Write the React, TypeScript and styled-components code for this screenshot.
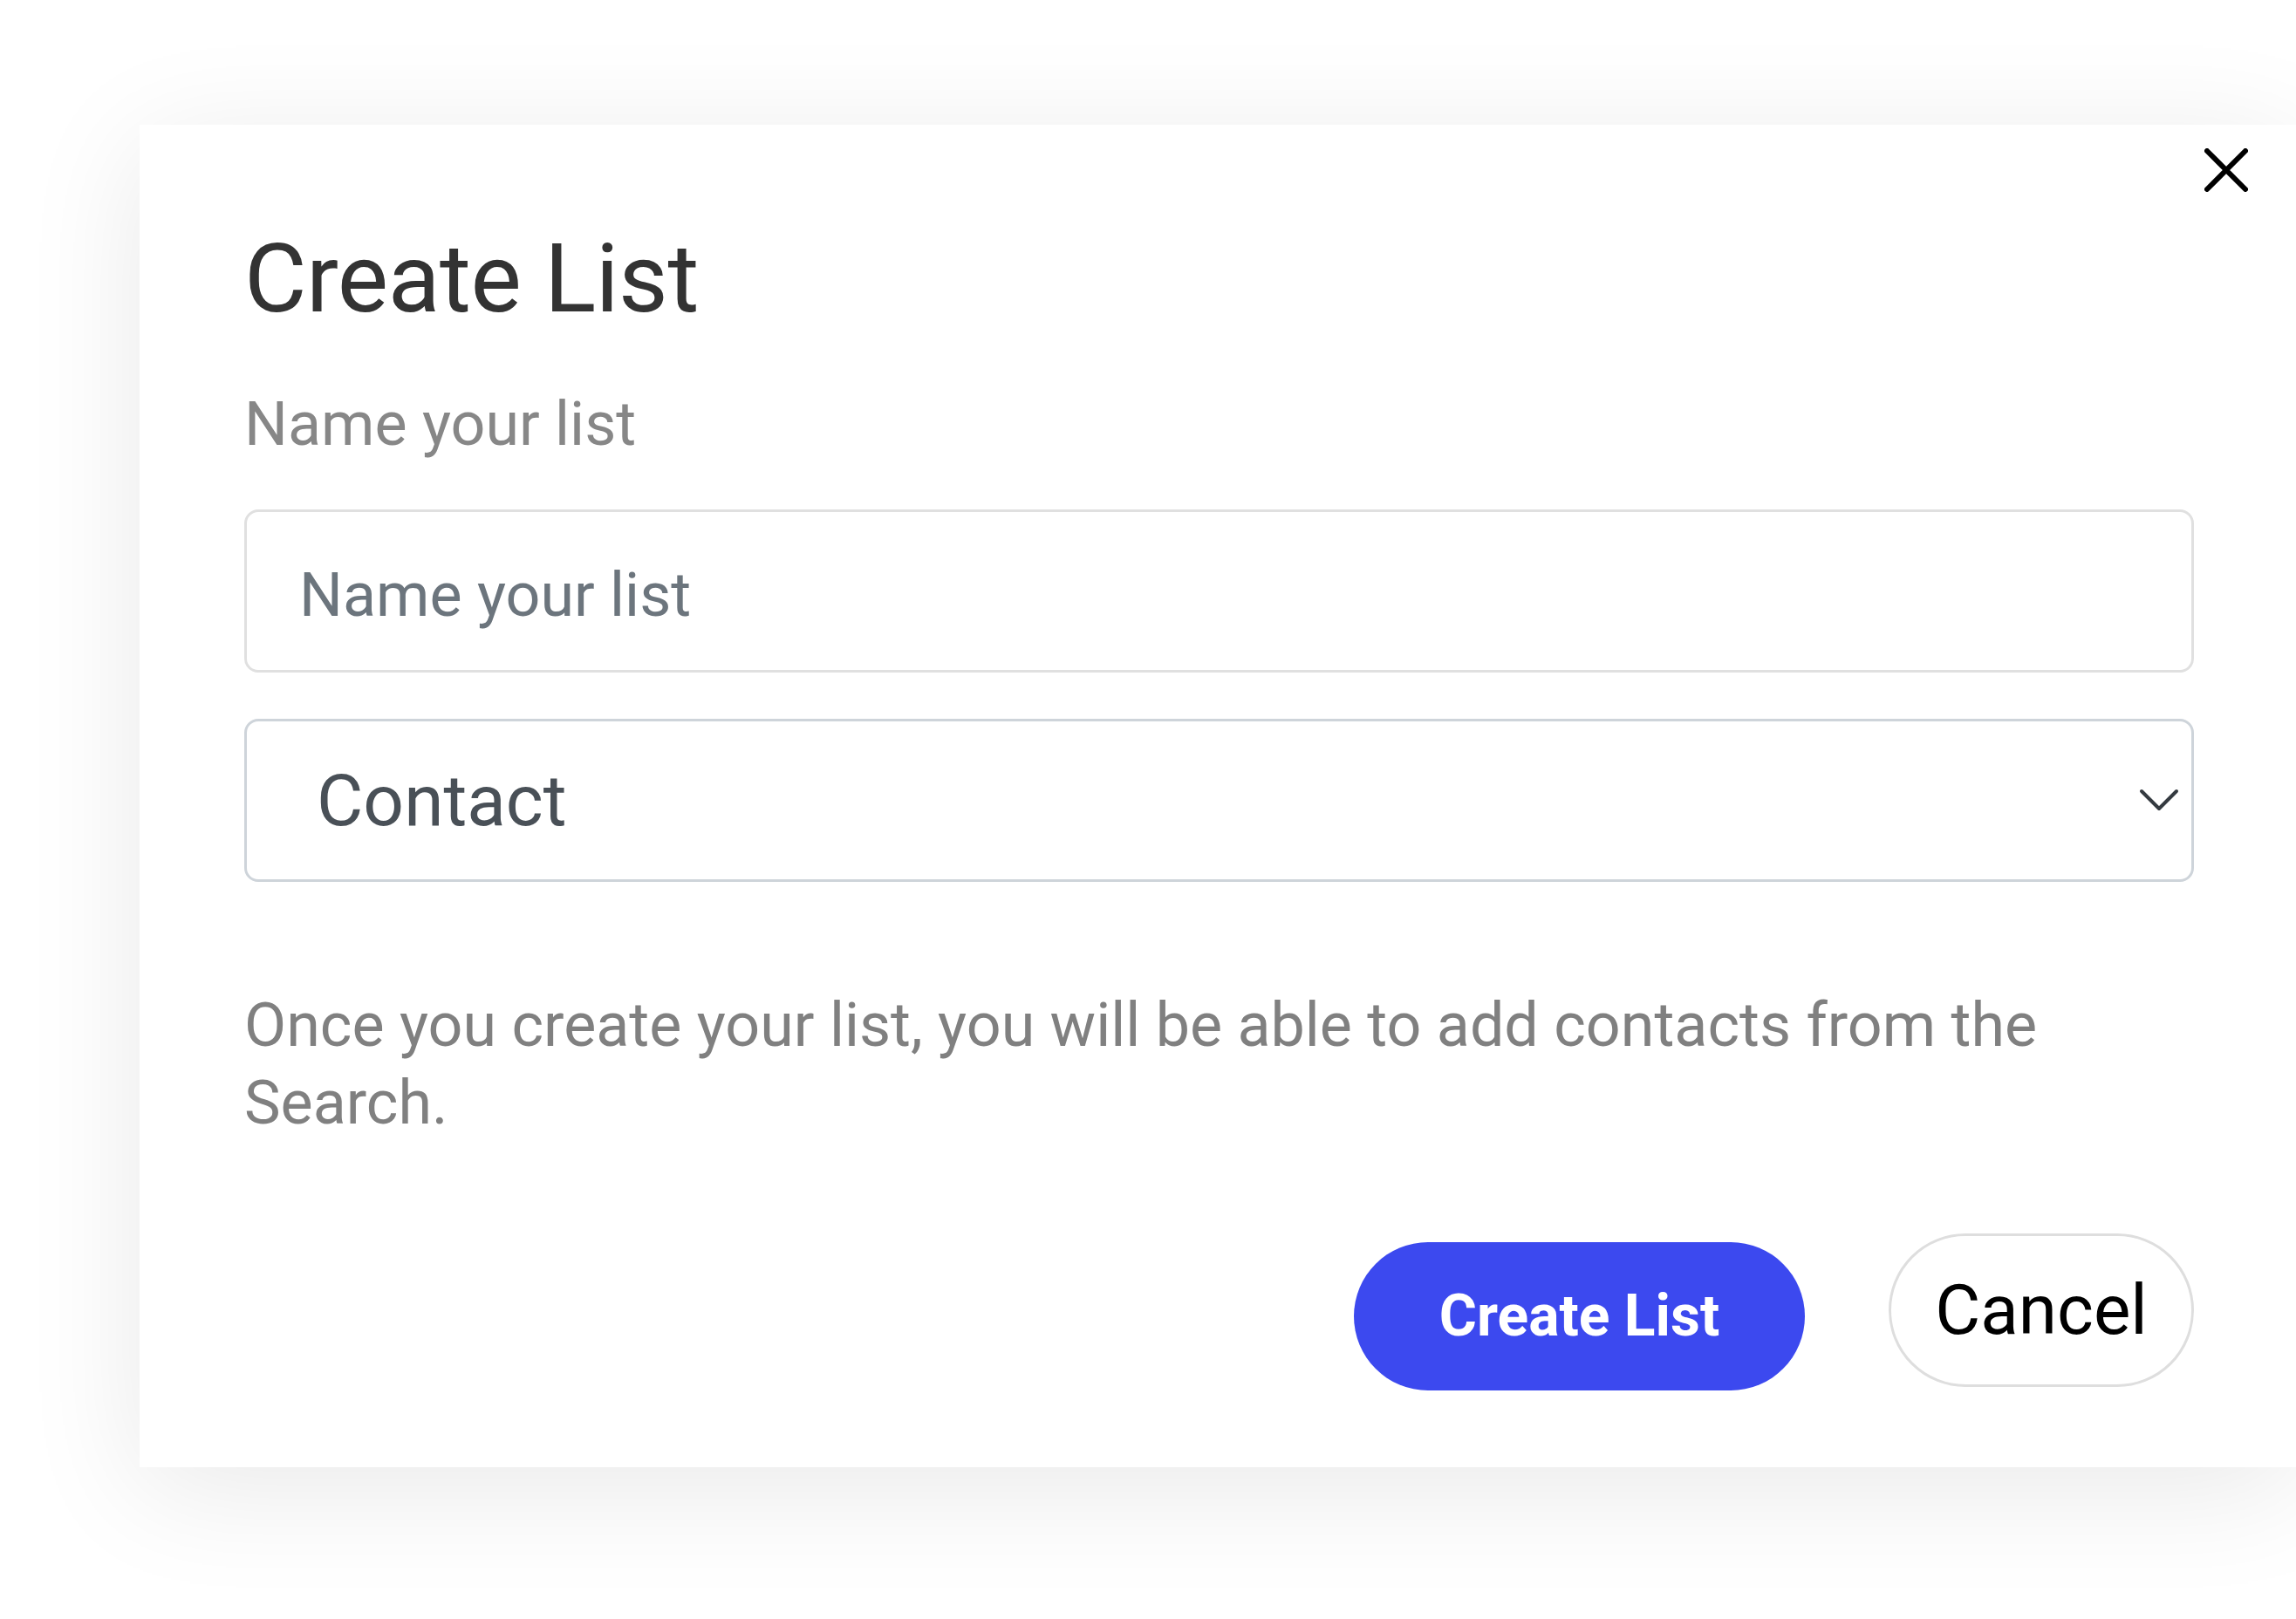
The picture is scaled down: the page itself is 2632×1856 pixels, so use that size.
import React, { useState } from 'react';
import styled, { createGlobalStyle } from 'styled-components';

const GlobalStyle = createGlobalStyle`
  html, body {
    margin: 0;
    padding: 0;
    background: #ffffff;
    overflow: hidden;
  }
  body {
    font-family: Roboto, "Noto Sans", Arial, sans-serif;
  }
  * {
    box-sizing: border-box;
  }
`;

const Page = styled.div`
  width: 100vw;
  height: 100vh;
  padding: 143px 0 0 160px;
  overflow: hidden;
`;

const Modal = styled.div`
  position: relative;
  width: 2475px;
  padding: 0 120px 88px;
  background: #ffffff;
  box-shadow: 0 24px 130px rgba(0, 0, 0, 0.09);
  display: flex;
  flex-direction: column;
`;

const CloseButton = styled.button`
  position: absolute;
  top: 27px;
  right: 58px;
  width: 50px;
  height: 50px;
  padding: 0;
  border: none;
  background: transparent;
  cursor: pointer;
  display: flex;
  align-items: center;
  justify-content: center;
`;

const Title = styled.h2`
  margin: 122px 0 0;
  font-size: 110px;
  line-height: 1;
  font-weight: 400;
  letter-spacing: -0.5px;
  color: #333333;
`;

const Label = styled.label`
  display: block;
  margin-top: 76px;
  font-size: 70px;
  line-height: 1;
  color: #878787;
`;

const TextInput = styled.input`
  margin-top: 63px;
  width: 100%;
  height: 187px;
  padding: 8px 57px 0 60px;
  border: 3px solid #e0e0e0;
  border-radius: 16px;
  font-family: Roboto, Arial, sans-serif;
  font-size: 70px;
  color: #495057;
  outline: none;

  &::placeholder {
    color: #6c757d;
  }
`;

const SelectWrap = styled.div`
  position: relative;
  margin-top: 53px;
`;

const Select = styled.select`
  width: 100%;
  height: 187px;
  padding: 0 120px 0 80px;
  border: 3px solid #ced4da;
  border-radius: 16px;
  background: #ffffff;
  font-family: Roboto, Arial, sans-serif;
  font-size: 82px;
  color: #495057;
  appearance: none;
  -webkit-appearance: none;
  outline: none;
`;

const Chevron = styled.svg`
  position: absolute;
  right: 17px;
  top: 80px;
  pointer-events: none;
`;

const Help = styled.p`
  margin: 120px 0 0;
  font-size: 70px;
  line-height: 89px;
  color: #808080;
`;

const Actions = styled.div`
  margin-top: 105px;
  display: flex;
  justify-content: flex-end;
  align-items: flex-start;
  gap: 96px;
`;

const PillButton = styled.button<{ primary?: boolean }>`
  height: ${p => (p.primary ? '170px' : '176px')};
  margin-top: ${p => (p.primary ? '10px' : '0')};
  padding: 0;
  width: ${p => (p.primary ? '517px' : '350px')};
  border-radius: 90px;
  border: ${p => (p.primary ? 'none' : '3px solid #dedede')};
  background: ${p => (p.primary ? '#3c49ef' : '#ffffff')};
  color: ${p => (p.primary ? '#ffffff' : '#000000')};
  font-family: Roboto, Arial, sans-serif;
  font-size: ${p => (p.primary ? '66px' : '80px')};
  font-weight: ${p => (p.primary ? 700 : 400)};
  line-height: 1;
  cursor: pointer;
`;

export default function App() {
  const [name, setName] = useState('');
  const [kind, setKind] = useState('contact');

  return (
    <>
      <GlobalStyle />
      <Page>
        <Modal>
          <CloseButton aria-label="Close">
            <svg width="50" height="50" viewBox="0 0 50 50">
              <path d="M3 3 L47 47 M47 3 L3 47" stroke="#000" strokeWidth="6" strokeLinecap="round" />
            </svg>
          </CloseButton>
          <Title>Create List</Title>
          <Label htmlFor="list-name">Name your list</Label>
          <TextInput
            id="list-name"
            placeholder="Name your list"
            value={name}
            onChange={e => setName(e.target.value)}
          />
          <SelectWrap>
            <Select value={kind} onChange={e => setKind(e.target.value)}>
              <option value="contact">Contact</option>
              <option value="company">Company</option>
            </Select>
            <Chevron width="46" height="27" viewBox="0 0 46 27">
              <path d="M3 3 L23 23 L43 3" fill="none" stroke="#343a40" strokeWidth="4" strokeLinecap="round" strokeLinejoin="round" />
            </Chevron>
          </SelectWrap>
          <Help>Once you create your list, you will be able to add contacts from the Search.</Help>
          <Actions>
            <PillButton primary>Create List</PillButton>
            <PillButton>Cancel</PillButton>
          </Actions>
        </Modal>
      </Page>
    </>
  );
}
